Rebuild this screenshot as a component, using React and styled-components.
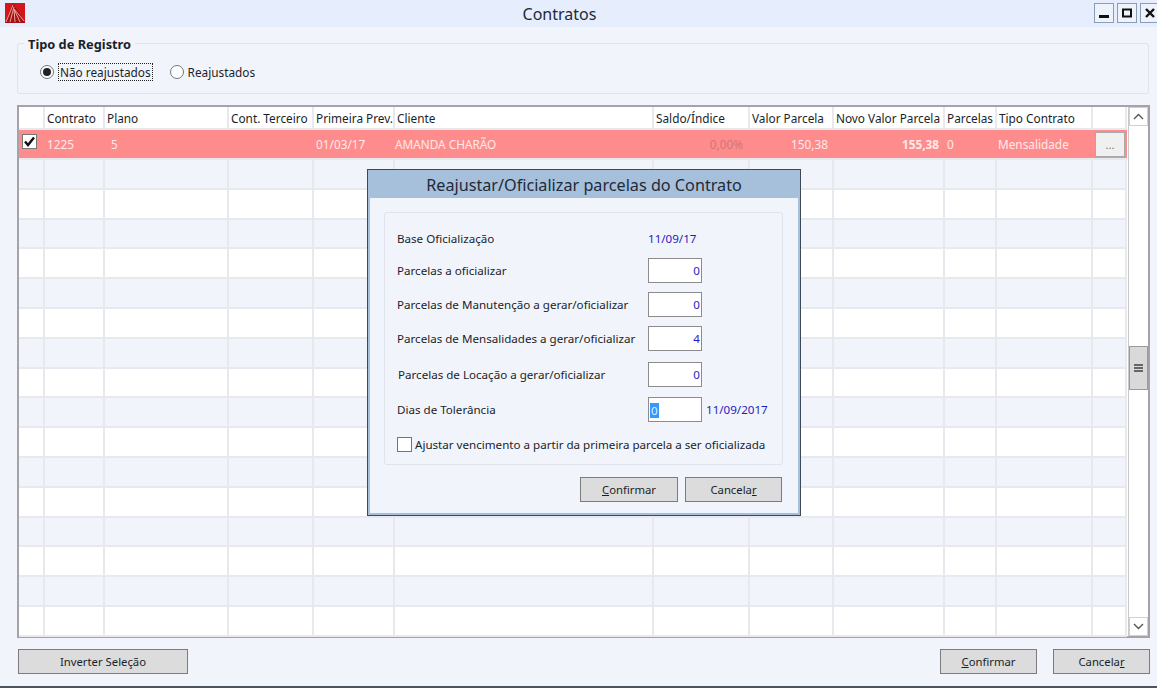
import React from 'react'
import styled, {createGlobalStyle} from 'styled-components'

const GlobalStyle = createGlobalStyle`
  html, body {
    margin: 0;
    padding: 0;
    background: #f2f4fb;
  }
  * {
    box-sizing: border-box;
  }
`

const Window = styled.div`
  position: relative;
  width: 1157px;
  height: 688px;
  overflow: hidden;
  display: flex;
  flex-direction: column;
  background: #f2f4fb;
  border-bottom: 2px solid #4a5560;
  font-family: 'Noto Sans', 'Liberation Sans', sans-serif;
  font-size: 11.8px;
  color: #1a1f2a;
`

const TitleBar = styled.div`
  height: 27px;
  flex: none;
  display: flex;
  align-items: flex-start;
  background: #e6edfc;
`

const AppIcon = styled.svg`
  width: 20px;
  height: 20px;
  margin: 3px 0 0 5px;
  flex: none;
`

const Title = styled.div`
  flex: 1;
  text-align: center;
  font-size: 16px;
  line-height: 29px;
  color: #222a36;
`

const WinControls = styled.div`
  display: flex;
  gap: 3px;
  margin: 3px -3px 0 0;
  flex: none;
`

const WinButton = styled.div`
  width: 20px;
  height: 20px;
  display: flex;
  align-items: center;
  justify-content: center;
  background: #eef2fb;
  border: 1px solid #8b9db5;
`

const Content = styled.div`
  flex: 1;
  display: flex;
  flex-direction: column;
  padding: 16px 7px 12px 17px;
  min-height: 0;
`

const GroupBox = styled.div`
  position: relative;
  height: 51px;
  flex: none;
  border: 1px solid #dfe3ea;
  border-radius: 3px;
  display: flex;
  align-items: center;
  padding: 7px 0 0 22px;
  margin-right: 1px;
`

const Legend = styled.span`
  position: absolute;
  top: -8px;
  left: 6px;
  padding: 0 4px;
  background: #f2f4fb;
  font-weight: 700;
  font-size: 12.8px;
  line-height: 16px;
`

const RadioLabel = styled.div`
  display: flex;
  align-items: center;
  margin-right: ${p => p.$gap || 0}px;
`

const RadioDot = styled.span`
  width: 14px;
  height: 14px;
  border-radius: 50%;
  border: 1px solid #6f7680;
  background: #fff;
  display: flex;
  align-items: center;
  justify-content: center;
  margin-right: 3px;

  &::after {
    content: '';
    width: 8px;
    height: 8px;
    border-radius: 50%;
    background: ${p => (p.$on ? '#222' : 'transparent')};
  }
`

const RadioText = styled.span`
  line-height: 16px;
  padding: 0 1px;
  margin-left: ${p => (p.$focus ? 2 : 0)}px;
  outline: ${p => (p.$focus ? '1px dotted #222' : 'none')};
`

const GridFrame = styled.div`
  flex: 1;
  min-height: 0;
  margin-top: 11px;
  display: flex;
  border: 2px solid #a3a3a8;
  background: #fff;
`

const Table = styled.div`
  width: 1108px;
  flex: none;
`

const TableRow = styled.div`
  display: grid;
  grid-template-columns: 26px 60px 124px 85px 81px 259px 96px 84px 111px 52px 96px 34px;
  height: ${p => p.$h}px;
  background: ${p => p.$bg};
  border-bottom: 2px solid ${p => p.$line || '#e8e9ee'};
`

const HeadCell = styled.div`
  padding-left: 2px;
  line-height: 23px;
  white-space: nowrap;
  overflow: hidden;
  border-right: 2px solid #e8e9ee;
`

const Cell = styled.div`
  border-right: 2px solid #e8e9ee;
`

const PinkCell = styled.div`
  position: relative;
  line-height: 29px;
  white-space: nowrap;
  padding: ${p => (p.$right ? `0 ${p.$right}px 0 0` : `0 0 0 ${p.$left ?? 2}px`)};
  text-align: ${p => (p.$right ? 'right' : 'left')};
  font-weight: ${p => (p.$bold ? 700 : 400)};
  color: ${p => p.$color || '#ffe9e9'};
`

const CheckMark = styled.svg`
  position: absolute;
  left: 3px;
  top: 4px;
  width: 15px;
  height: 15px;
`

const EllipsisButton = styled.div`
  width: 30px;
  height: 25px;
  margin: 2px 0 0 2px;
  background: #f0f0f0;
  border: 1px solid #a9a9a9;
  color: #777;
  text-align: center;
  line-height: 24px;
  font-size: 11px;
`

const ScrollBar = styled.div`
  flex: 1;
  display: flex;
  flex-direction: column;
  margin-left: 1px;
  border-left: 1px solid #c9c9c9;
  background: #fff;
`

const ScrollArrow = styled.div`
  height: 19px;
  flex: none;
  display: flex;
  align-items: center;
  justify-content: center;
  border: 1px solid #d0d0d0;
`

const ScrollTrack = styled.div`
  flex: 1;
  padding-top: 220px;
`

const ScrollThumb = styled.div`
  height: 44px;
  background: #d9d9d9;
  border: 1px solid #9a9a9a;
  display: flex;
  flex-direction: column;
  align-items: center;
  justify-content: center;
  gap: 1px;

  span {
    width: 9px;
    height: 2px;
    background: #666;
  }
`

const Footer = styled.div`
  flex: none;
  display: flex;
  align-items: center;
  gap: 16px;
  margin-top: 11px;
  padding-left: 1px;
`

const ActionButton = styled.div`
  width: ${p => p.$w}px;
  height: 25px;
  margin-left: ${p => (p.$push ? 'auto' : 0)};
  background: #dcdcdc;
  border: 1px solid #7c7c7c;
  text-align: center;
  line-height: 23px;
  font-size: 11.3px;
  color: #1a1f2a;
`

const Dialog = styled.div`
  position: absolute;
  left: 367px;
  top: 169px;
  width: 434px;
  height: 347px;
  display: flex;
  flex-direction: column;
  background: #f2f4fb;
  border: 1px solid #3c4a58;
  box-shadow: inset 0 0 0 2px #a6c0dc;
`

const DialogTitle = styled.div`
  height: 28px;
  flex: none;
  background: #a6c0dc;
  text-align: center;
  font-size: 16.2px;
  line-height: 30px;
  color: #1f2a38;
`

const DialogBody = styled.div`
  flex: 1;
  display: flex;
  flex-direction: column;
  padding: 14px 17px 13px 16px;
  font-size: 11.6px;
`

const InnerGroup = styled.div`
  height: 253px;
  flex: none;
  border: 1px solid #dfe3ea;
  border-radius: 3px;
  padding: 9px 12px 0;
  display: flex;
  flex-direction: column;
`

const FormRow = styled.div`
  height: ${p => p.$h}px;
  flex: none;
  display: flex;
  align-items: center;
  white-space: nowrap;
`

const FormLabel = styled.div`
  width: 251px;
  flex: none;
  padding-left: ${p => p.$indent || 0}px;
`

const BlueText = styled.div`
  color: #1f1cc0;
  margin-left: ${p => p.$left || 0}px;
`

const NumberBox = styled.div`
  width: 54px;
  height: 25px;
  flex: none;
  background: #fff;
  border: 1px solid #8c8c8c;
  color: #1f1cc0;
  text-align: right;
  padding: 0 1px;
  line-height: 23px;
`

const FocusBox = styled(NumberBox)`
  text-align: left;
`

const Selected = styled.span`
  display: inline-block;
  background: #3399ff;
  color: #dceeff;
  line-height: 15px;
  padding: 0 1px;
  vertical-align: middle;
`

const BoxCheck = styled.span`
  width: 15px;
  height: 15px;
  flex: none;
  background: #fff;
  border: 1px solid #6f7680;
  margin-right: 3px;
`

const DialogActions = styled.div`
  display: flex;
  justify-content: flex-end;
  gap: 7px;
  margin-top: 12px;
  padding-right: 1px;
`

const Col = ['', 'Contrato', 'Plano', 'Cont. Terceiro', 'Primeira Prev.', 'Cliente', 'Saldo/Índice', 'Valor Parcela', 'Novo Valor Parcela', 'Parcelas', 'Tipo Contrato', '']

const emptyRows = Array.from({length: 16}, (_, i) => i)

function App() {
  return (
    <>
      <GlobalStyle />
      <Window>
        <TitleBar>
          <AppIcon viewBox="0 0 20 20">
            <rect width="20" height="20" fill="#d3151c" />
            <path d="M0 20 L8 0 L20 20 Z" fill="#a11216" />
            <path d="M1 19 L8 2 M5 19 L9 4 M10 19 L9 6 L15 19 M9 6 L19 18" stroke="#f0a09a" strokeWidth="1" fill="none" />
          </AppIcon>
          <Title>Contratos</Title>
          <WinControls>
            <WinButton>
              <svg width="12" height="12" viewBox="0 0 12 12"><rect x="1" y="8" width="10" height="3" fill="#111" /></svg>
            </WinButton>
            <WinButton>
              <svg width="12" height="12" viewBox="0 0 12 12"><path d="M2 2.5 H10 V9.5 H2 Z" fill="none" stroke="#111" strokeWidth="2" /></svg>
            </WinButton>
            <WinButton>
              <svg width="12" height="12" viewBox="0 0 12 12"><path d="M2 2 L10 10 M10 2 L2 10" stroke="#111" strokeWidth="2.4" /></svg>
            </WinButton>
          </WinControls>
        </TitleBar>

        <Content>
          <GroupBox>
            <Legend>Tipo de Registro</Legend>
            <RadioLabel $gap={18}>
              <RadioDot $on />
              <RadioText $focus>Não reajustados</RadioText>
            </RadioLabel>
            <RadioLabel>
              <RadioDot />
              <RadioText>Reajustados</RadioText>
            </RadioLabel>
          </GroupBox>

          <GridFrame>
            <Table>
              <TableRow $h={23} $bg="#fff">
                {Col.map((name, i) => (
                  <HeadCell key={i}>{name}</HeadCell>
                ))}
              </TableRow>
              <TableRow $h={30} $bg="#ff8c8c">
                <PinkCell>
                  <CheckMark viewBox="0 0 15 15">
                    <rect x="0.5" y="0.5" width="14" height="14" fill="#fff" stroke="#777" />
                    <path d="M3 7.5 L6 11 L12 3.5" fill="none" stroke="#111" strokeWidth="2.4" />
                  </CheckMark>
                </PinkCell>
                <PinkCell>1225</PinkCell>
                <PinkCell $left={6}>5</PinkCell>
                <PinkCell />
                <PinkCell>01/03/17</PinkCell>
                <PinkCell $left={0}>AMANDA CHARÃO</PinkCell>
                <PinkCell $right={7} $color="#d07676">0,00%</PinkCell>
                <PinkCell $right={6}>150,38</PinkCell>
                <PinkCell $right={6} $bold>155,38</PinkCell>
                <PinkCell>0</PinkCell>
                <PinkCell $left={1}>Mensalidade</PinkCell>
                <PinkCell $left={0}><EllipsisButton>...</EllipsisButton></PinkCell>
              </TableRow>
              {emptyRows.map(r => (
                <TableRow key={r} $h={29.8} $bg={r % 2 === 0 ? '#f2f4fb' : '#fff'}>
                  {Col.map((_, i) => (
                    <Cell key={i} />
                  ))}
                </TableRow>
              ))}
            </Table>
            <ScrollBar>
              <ScrollArrow>
                <svg width="11" height="7" viewBox="0 0 11 7"><path d="M1 6 L5.5 1.5 L10 6" fill="none" stroke="#555" strokeWidth="1.4" /></svg>
              </ScrollArrow>
              <ScrollTrack>
                <ScrollThumb>
                  <span />
                  <span />
                  <span />
                </ScrollThumb>
              </ScrollTrack>
              <ScrollArrow>
                <svg width="11" height="7" viewBox="0 0 11 7"><path d="M1 1 L5.5 5.5 L10 1" fill="none" stroke="#555" strokeWidth="1.4" /></svg>
              </ScrollArrow>
            </ScrollBar>
          </GridFrame>

          <Footer>
            <ActionButton $w={170}>Inverter Seleção</ActionButton>
            <ActionButton $w={97} $push><u>C</u>onfirmar</ActionButton>
            <ActionButton $w={97}>Cancela<u>r</u></ActionButton>
          </Footer>
        </Content>

        <Dialog>
          <DialogTitle>Reajustar/Oficializar parcelas do Contrato</DialogTitle>
          <DialogBody>
            <InnerGroup>
              <FormRow $h={32}>
                <FormLabel>Base Oficialização</FormLabel>
                <BlueText>11/09/17</BlueText>
              </FormRow>
              <FormRow $h={33}>
                <FormLabel>Parcelas a oficializar</FormLabel>
                <NumberBox>0</NumberBox>
              </FormRow>
              <FormRow $h={34}>
                <FormLabel>Parcelas de Manutenção a gerar/oficializar</FormLabel>
                <NumberBox>0</NumberBox>
              </FormRow>
              <FormRow $h={35}>
                <FormLabel>Parcelas de Mensalidades a gerar/oficializar</FormLabel>
                <NumberBox>4</NumberBox>
              </FormRow>
              <FormRow $h={36}>
                <FormLabel $indent={1}>Parcelas de Locação a gerar/oficializar</FormLabel>
                <NumberBox>0</NumberBox>
              </FormRow>
              <FormRow $h={35}>
                <FormLabel>Dias de Tolerância</FormLabel>
                <FocusBox><Selected>0</Selected></FocusBox>
                <BlueText $left={4}>11/09/2017</BlueText>
              </FormRow>
              <FormRow $h={34}>
                <BoxCheck />
                Ajustar vencimento a partir da primeira parcela a ser oficializada
              </FormRow>
            </InnerGroup>
            <DialogActions>
              <ActionButton $w={98}><u>C</u>onfirmar</ActionButton>
              <ActionButton $w={97}>Cancela<u>r</u></ActionButton>
            </DialogActions>
          </DialogBody>
        </Dialog>
      </Window>
    </>
  )
}

export default App
